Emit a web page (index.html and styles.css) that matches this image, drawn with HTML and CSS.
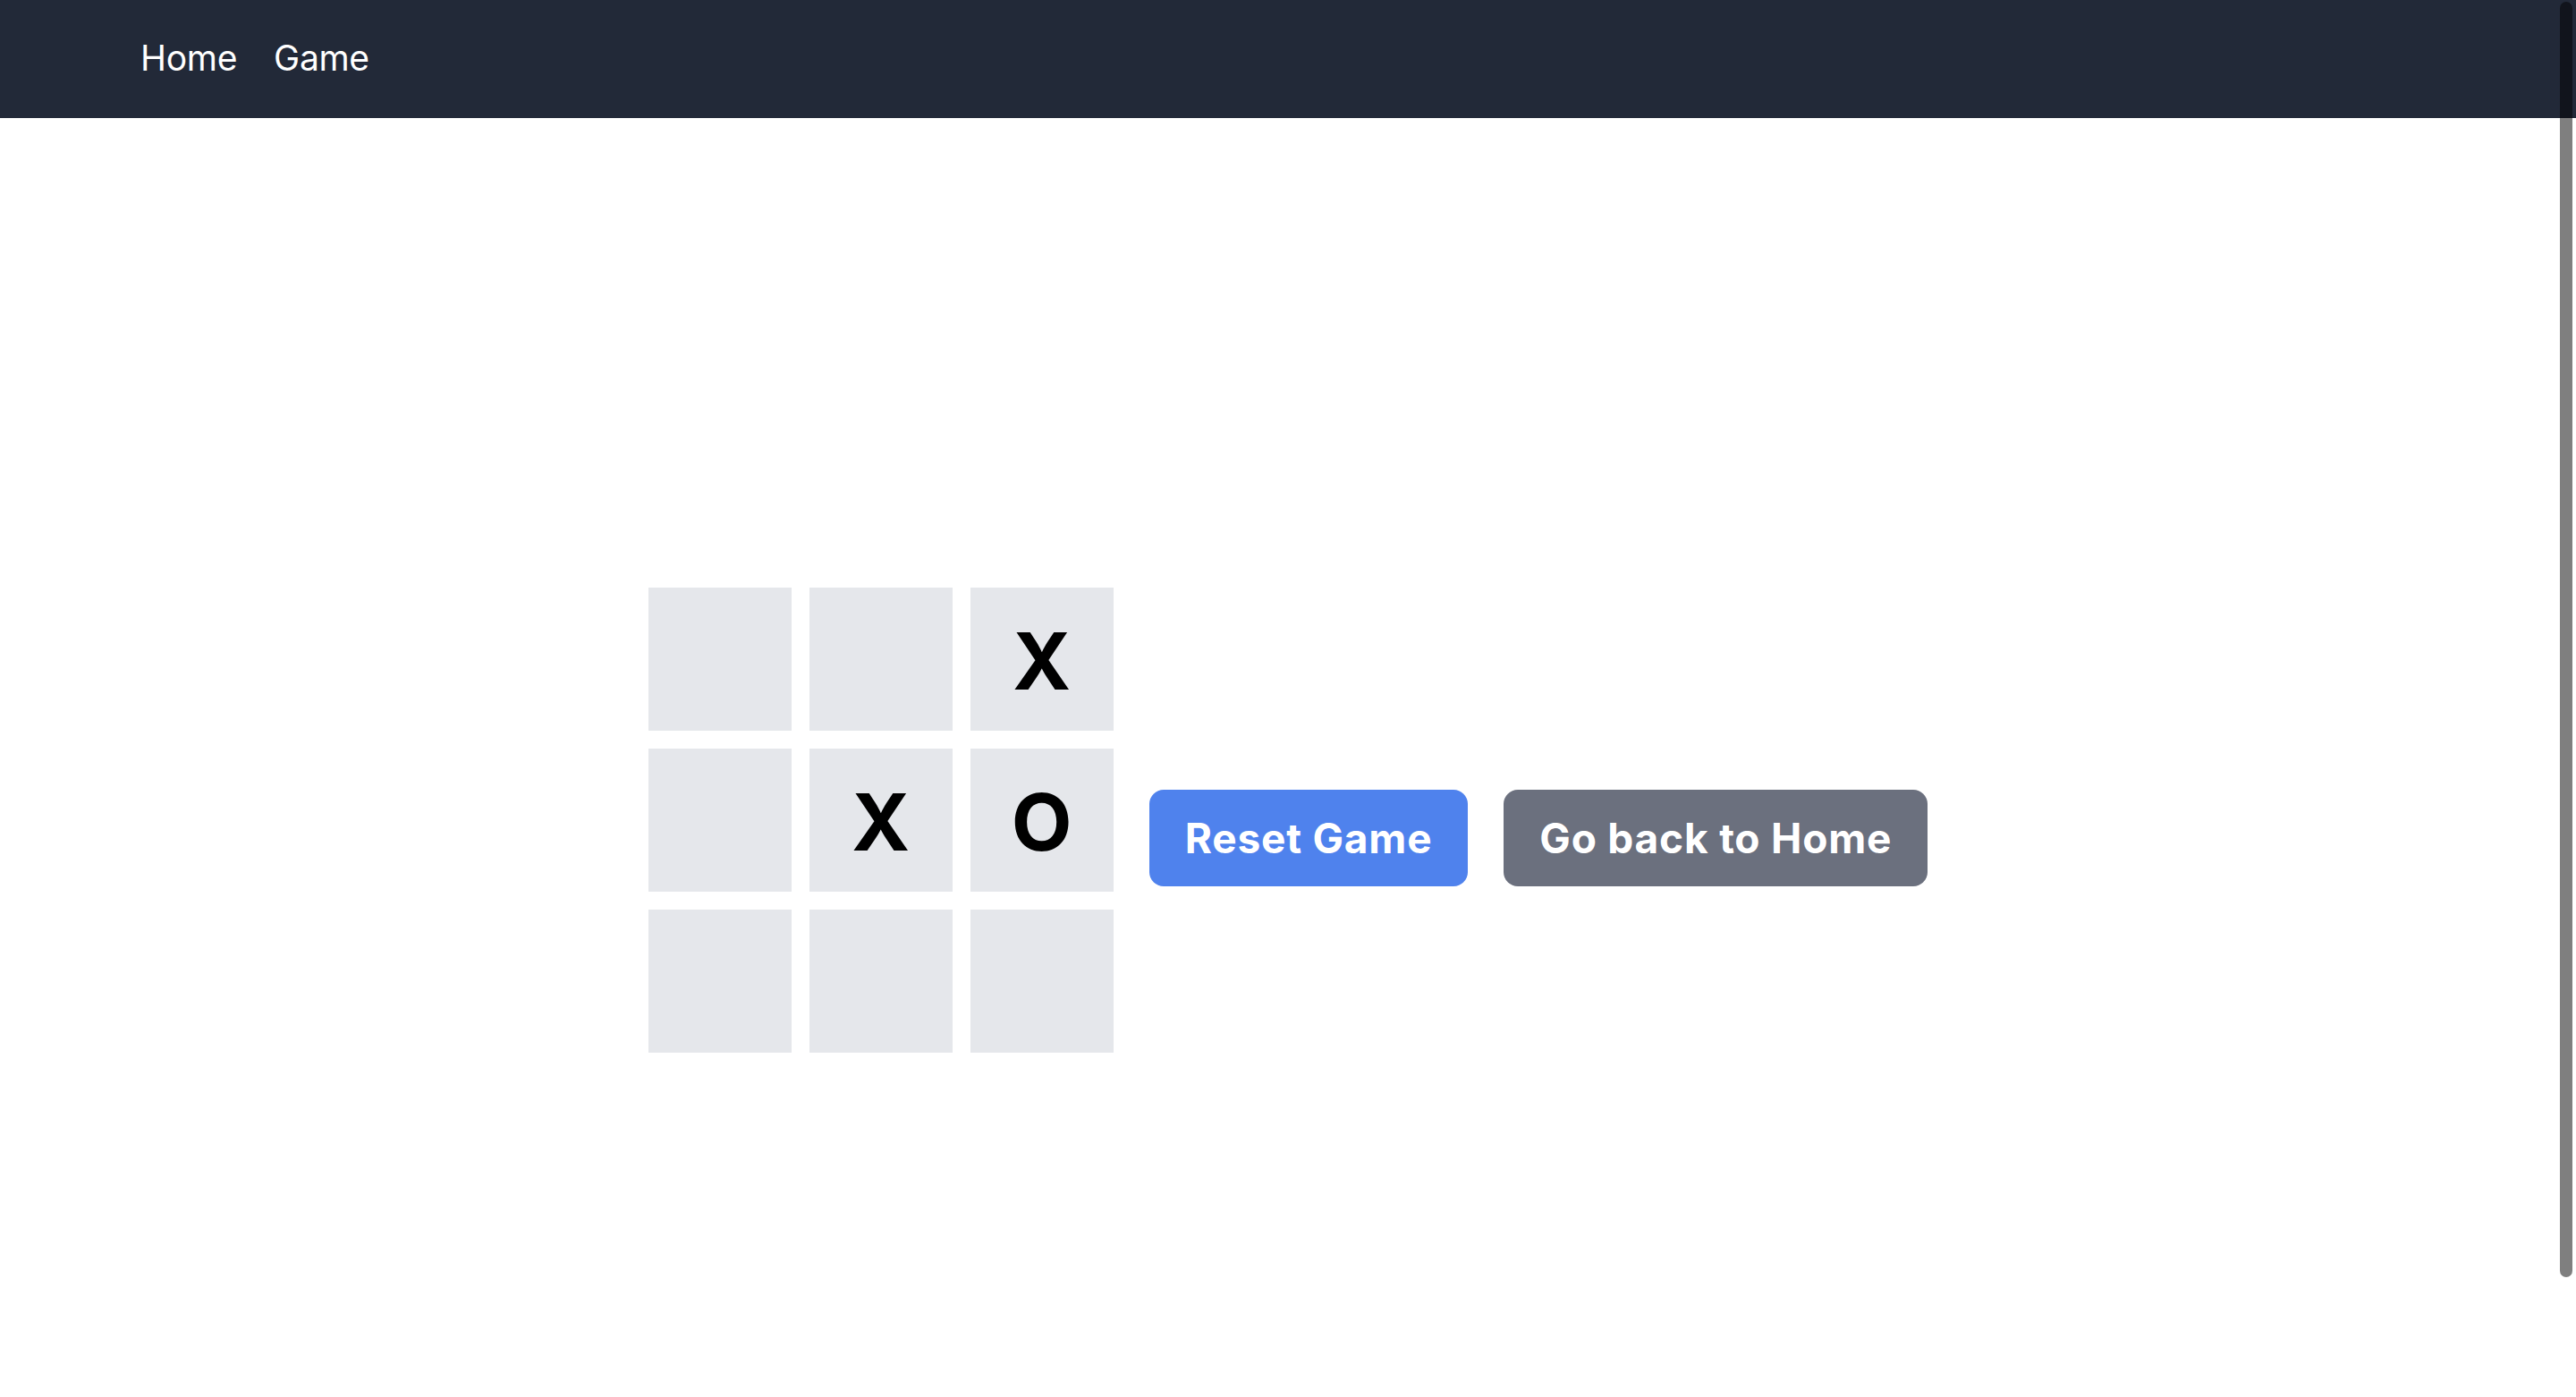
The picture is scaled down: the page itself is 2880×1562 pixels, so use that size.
FILE: index.html
```html
<!DOCTYPE html>
<html lang="en">
<head>
<meta charset="utf-8">
<title>Tic Tac Toe</title>
<link rel="stylesheet" href="styles.css">
</head>
<body>
<nav class="navbar">
  <a class="nav-link" href="#">Home</a>
  <a class="nav-link" href="#">Game</a>
</nav>
<main class="main">
  <div class="board">
    <div class="cell"></div>
    <div class="cell"></div>
    <div class="cell">X</div>
    <div class="cell"></div>
    <div class="cell">X</div>
    <div class="cell">O</div>
    <div class="cell"></div>
    <div class="cell"></div>
    <div class="cell"></div>
  </div>
  <div class="actions">
    <button class="btn btn-primary">Reset Game</button>
    <button class="btn btn-secondary">Go back to Home</button>
  </div>
</main>
<div class="scroll-thumb"></div>
</body>
</html>
```

FILE: styles.css
```css
html {
  overflow: hidden;
}

body {
  margin: 0;
  background: #ffffff;
  font-family: Inter, "Noto Sans", "Liberation Sans", sans-serif;
  color: #000;
}

.navbar {
  height: 132px;
  background: #222938;
  display: flex;
  align-items: center;
  gap: 41px;
  padding-left: 157px;
  box-sizing: border-box;
}

.nav-link {
  color: #ffffff;
  text-decoration: none;
  font-size: 39px;
  line-height: 56px;
  font-weight: 400;
  letter-spacing: -0.3px;
  padding-bottom: 2px;
}

.main {
  padding-top: 525px;
  display: flex;
  justify-content: center;
  align-items: center;
}

.board {
  display: grid;
  grid-template-columns: repeat(3, 160px);
  grid-auto-rows: 160px;
  gap: 20px;
  margin-bottom: 40px;
}

.cell {
  background: #e5e7eb;
  display: flex;
  align-items: center;
  justify-content: center;
  font-size: 88px;
  font-weight: 700;
  line-height: 1;
  padding-top: 4px;
  box-sizing: border-box;
}

.actions {
  display: flex;
  gap: 40px;
  margin-left: 40px;
}

.btn {
  border: none;
  border-radius: 16px;
  color: #ffffff;
  font-family: Inter, "Noto Sans", "Liberation Sans", sans-serif;
  font-size: 46px;
  font-weight: 700;
  line-height: 56px;
  letter-spacing: 0.8px;
  padding: 26px 40px;
  cursor: pointer;
}

.btn-primary {
  background: #4f82ed;
}

.btn-secondary {
  background: #6b707e;
}

.scroll-thumb {
  position: fixed;
  top: 2px;
  right: 4px;
  width: 14px;
  height: 1426px;
  border-radius: 7px;
  background: rgba(0, 0, 0, 0.5);
}
```
